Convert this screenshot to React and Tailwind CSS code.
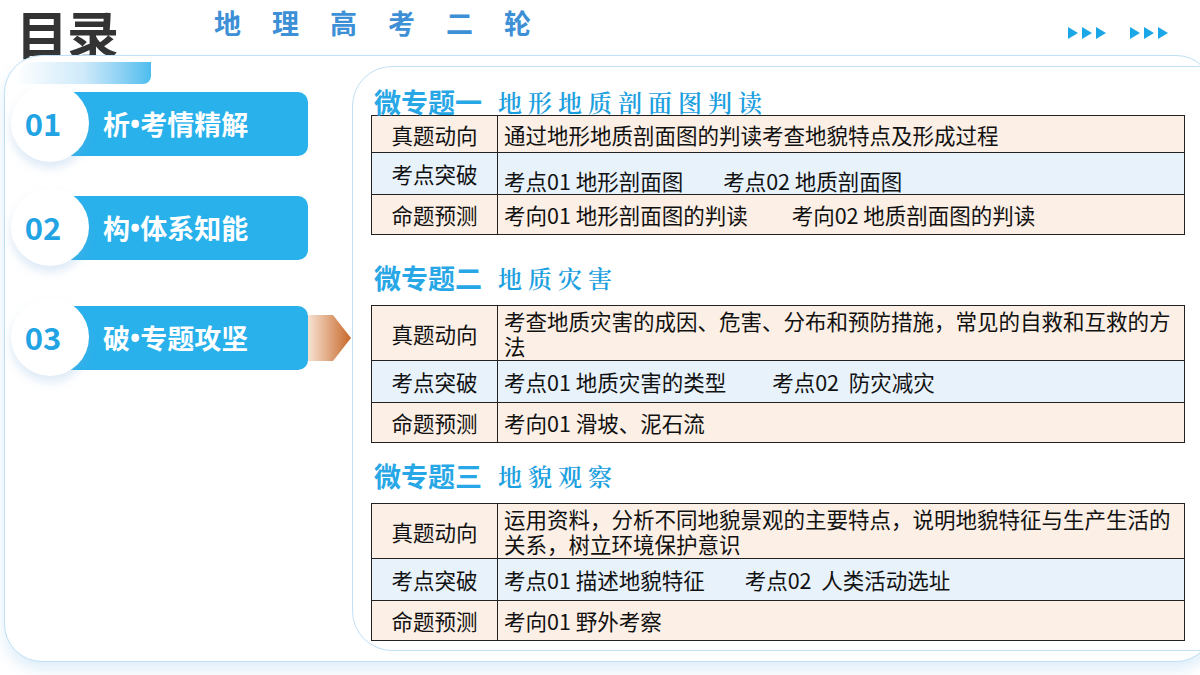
const F = { fontFamily: '"Noto Sans CJK SC","Noto Sans",sans-serif' };

function Tri() {
  return (
    <svg width="10" height="12" viewBox="0 0 10 12"><path d="M0 0L10 6L0 12Z" fill="#1ba6e8" /></svg>
  );
}

function Nav({ num, a, b, arrow }) {
  return (
    <div className="relative flex items-center h-[64px]">
      <div className="absolute left-[-4px] top-[-8px] w-[78px] h-[78px] rounded-full bg-white shadow-[0_6px_10px_rgba(120,170,220,0.25)] z-10 flex items-center justify-center">
        <span className="text-[31px] font-bold text-[#22a4e4] ml-[-14px]">{num}</span>
      </div>
      <div className="ml-[46px] w-[247px] h-[64px] rounded-[10px] bg-[#29b1ec] flex items-center pl-[42px] text-white text-[27px] font-bold">
        {a}<span style={{ fontFamily: '"Noto Sans",sans-serif' }}>•</span>{b}
      </div>
      {arrow && (
        <svg width="43" height="46" viewBox="0 0 43 46">
          <defs>
            <linearGradient id="ag" x1="0" x2="1">
              <stop offset="0" stopColor="#f7e2d2" />
              <stop offset="1" stopColor="#c8682a" />
            </linearGradient>
          </defs>
          <path d="M0 0H25L43 23L25 46H0Z" fill="url(#ag)" />
        </svg>
      )}
    </div>
  );
}

function Table({ rows }) {
  return (
    <div className="border-[1.5px] border-[#222] text-[21.5px] text-[#111] leading-[25px]">
      {rows.map((r, i) => (
        <div key={i} className={`flex ${i > 0 ? 'border-t-[1.5px] border-[#222]' : ''} ${i === 1 ? 'bg-[#e8f2fb]' : 'bg-[#fcefe5]'}`} style={{ height: r.h }}>
          <div className="w-[126px] shrink-0 border-r-[1.5px] border-[#222] flex items-center justify-center">{r.a}</div>
          <div className={`flex-1 pl-[6px] pr-[2px] flex ${r.bottom ? 'items-end pb-[1px]' : 'items-center'}`}>{r.b}</div>
        </div>
      ))}
    </div>
  );
}

function Heading({ a, b }) {
  return (
    <div className="flex items-end gap-[16px] h-[40px] pl-[3px]">
      <span className="text-[27px] font-bold text-[#27a7e6] leading-none">{a}</span>
      <span className="text-[24px] text-[#1ca0e0] tracking-[6px] leading-none pb-[1px]" style={{ fontFamily: '"Noto Serif CJK SC","Noto Sans CJK SC",serif', fontWeight: 600 }}>{b}</span>
    </div>
  );
}

export default function App() {
  return (
    <div className="w-[1200px] h-[675px] bg-white relative overflow-hidden" style={F}>
      <div className="flex items-center h-[62px]">
        <div className="w-[180px] shrink-0 text-[52px] font-bold text-[#333] pl-[16px] leading-[60px] pt-[4px] tracking-[-1px]">目录</div>
        <div className="ml-[34px] text-[27px] font-bold text-[#3d90d6] tracking-[31px] mt-[-16px]">地理高考二轮</div>
        <div className="ml-auto mr-[32px] mt-[4px] flex gap-[4px]">
          <Tri /><Tri /><Tri /><div className="w-[16px]" /><Tri /><Tri /><Tri />
        </div>
      </div>
      <div className="absolute left-[4px] top-[55px] w-[1210px] h-[607px] rounded-[38px] border border-[#bfe0f5] bg-white shadow-[0_8px_14px_rgba(150,200,235,0.3)] flex">
        <div className="w-[347px] shrink-0 relative pt-[6px]">
          <div className="ml-[10px] w-[136px] h-[22px] rounded-br-[8px] rounded-tl-[20px] bg-gradient-to-r from-white via-[#cfeafa] to-[#4bbdee]" />
          <div className="mt-[8px] pl-[10px] flex flex-col gap-[42px]">
            <Nav num="01" a="析" b="考情精解" />
            <div className="mt-[-2px]"><Nav num="02" a="构" b="体系知能" /></div>
            <div className="mt-[4px]"><Nav num="03" a="破" b="专题攻坚" arrow /></div>
          </div>
        </div>
        <div className="mt-[10px] mb-[10px] flex-1 rounded-l-[40px] border border-[#bfe0f5] pl-[18px] pr-[27px] pt-[8px]">
          <Heading a="微专题一" b="地形地质剖面图判读" />
          <Table rows={[
            { a: '真题动向', b: '通过地形地质剖面图的判读考查地貌特点及形成过程', h: 36 },
            { a: '考点突破', b: <span>考点01 地形剖面图<span className="ml-[40px]">考点02 地质剖面图</span></span>, h: 42, bottom: true },
            { a: '命题预测', b: <span>考向01 地形剖面图的判读<span className="ml-[44px]">考向02 地质剖面图的判读</span></span>, h: 40 },
          ]} />
          <div className="mt-[16px]"><Heading a="微专题二" b="地质灾害" /></div>
          <div className="mt-[14px]"><Table rows={[
            { a: '真题动向', b: '考查地质灾害的成因、危害、分布和预防措施，常见的自救和互救的方法', h: 54 },
            { a: '考点突破', b: <span>考点01 地质灾害的类型<span className="ml-[46px]">考点02&nbsp; 防灾减灾</span></span>, h: 42 },
            { a: '命题预测', b: '考向01 滑坡、泥石流', h: 40 },
          ]} /></div>
          <div className="mt-[6px]"><Heading a="微专题三" b="地貌观察" /></div>
          <div className="mt-[14px]"><Table rows={[
            { a: '真题动向', b: '运用资料，分析不同地貌景观的主要特点，说明地貌特征与生产生活的关系，树立环境保护意识', h: 54 },
            { a: '考点突破', b: <span>考点01 描述地貌特征<span className="ml-[40px]">考点02&nbsp; 人类活动选址</span></span>, h: 42 },
            { a: '命题预测', b: '考向01 野外考察', h: 40 },
          ]} /></div>
        </div>
      </div>
    </div>
  );
}
